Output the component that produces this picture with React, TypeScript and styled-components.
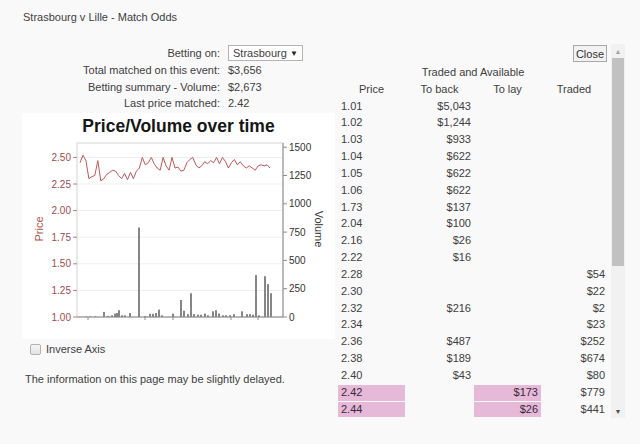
import styled, { createGlobalStyle } from "styled-components";

const GlobalStyle = createGlobalStyle`
    body {
        margin: 0;
        background: #f9f9f9;
        font-family: "Liberation Sans", Arial, sans-serif;
        font-size: 11px;
        color: #404040;
    }
`;

const Page = styled.div`
    width: 640px;
    height: 444px;
    overflow: hidden;
    box-sizing: border-box;
    padding: 10px 0 0 22px;
`;

const Title = styled.div`
    line-height: 14px;
    padding-left: 1px;
`;

const Columns = styled.div`
    display: flex;
    margin-top: 20px;
`;

const LeftColumn = styled.div`
    width: 313px;
    display: flex;
    flex-direction: column;
`;

const InfoGrid = styled.div`
    display: grid;
    grid-template-columns: 198px auto;
    grid-template-rows: 18px;
    grid-auto-rows: 16.5px;
    column-gap: 8px;
    align-items: center;
`;

const Label = styled.span`
    text-align: right;
`;

const FakeSelect = styled.div`
    width: 75px;
    height: 16px;
    box-sizing: border-box;
    display: flex;
    align-items: center;
    justify-content: space-between;
    padding: 0 4px 0 4px;
    background: #ffffff;
    border: 1px solid #b4b4b4;
    & span:last-child {
        font-size: 8px;
        color: #222;
    }
`;

const ChartBox = styled.div`
    margin-top: 1px;
    width: 313px;
    height: 226px;
    background: #ffffff;
`;

const ChartTitle = styled.div`
    text-align: center;
    font-size: 17.5px;
    font-weight: bold;
    line-height: 26px;
    color: #161616;
`;

const CheckRow = styled.label`
    display: flex;
    align-items: center;
    gap: 5px;
    margin-top: 5px;
    padding-left: 8px;
    height: 11px;
`;

const CheckBox = styled.input`
    appearance: none;
    margin: 0;
    width: 11px;
    height: 11px;
    border: 1px solid #b2b2b2;
    border-radius: 2px;
    background: linear-gradient(#f6f6f6, #e2e2e2);
`;

const Notice = styled.div`
    margin-top: 17px;
    padding-left: 3px;
    line-height: 14px;
`;

const RightColumn = styled.div`
    margin-left: 3px;
    height: 374px;
    display: flex;
`;

const TableArea = styled.div`
    width: 272px;
    display: flex;
    flex-direction: column;
    overflow: hidden;
`;

const CloseRow = styled.div`
    display: flex;
    justify-content: flex-end;
    padding: 1px 3px 0 0;
`;

const CloseButton = styled.button`
    height: 17px;
    padding: 0 2px;
    font-family: inherit;
    font-size: 11px;
    color: #333;
    background: #f2f2f2;
    border: 1px solid #a8a8a8;
    border-radius: 0;
`;

const OddsTable = styled.table`
    margin-top: 2px;
    width: 269px;
    table-layout: fixed;
    border-collapse: separate;
    border-spacing: 0 1px;
    & th {
        font-weight: normal;
        text-align: center;
        padding: 0;
        line-height: 15.83px;
    }
`;

const Cell = styled.td<{ $align?: "left" | "right"; $pad?: number; $hot?: boolean }>`
    padding: 0;
    line-height: 15.83px;
    text-align: ${(p) => p.$align || "right"};
    padding-left: ${(p) => (p.$align === "left" ? 3 : 0)}px;
    padding-right: ${(p) => (p.$align === "left" ? 0 : p.$pad ?? 3)}px;
    background: ${(p) => (p.$hot ? "#e6b9d8" : "transparent")};
    color: ${(p) => (p.$hot ? "#3a2838" : "inherit")};
    white-space: nowrap;
`;

const ScrollBar = styled.div`
    margin-left: 1px;
    width: 14px;
    display: flex;
    flex-direction: column;
    background: #f1f1f1;
`;

const ScrollArrow = styled.div<{ $dark?: boolean }>`
    height: 14px;
    display: flex;
    align-items: center;
    justify-content: center;
    font-size: 7px;
    color: ${(p) => (p.$dark ? "#505050" : "#a3a3a3")};
`;

const ScrollTrack = styled.div`
    flex: 1;
    padding: 0 1px;
`;

const ScrollThumb = styled.div<{ $size: number }>`
    height: ${(p) => p.$size}px;
    background: #c1c1c1;
`;

type Row = { price: string; back?: string; lay?: string; traded?: string; hot?: boolean };

const rows: Row[] = [
    { price: "1.01", back: "$5,043" },
    { price: "1.02", back: "$1,244" },
    { price: "1.03", back: "$933" },
    { price: "1.04", back: "$622" },
    { price: "1.05", back: "$622" },
    { price: "1.06", back: "$622" },
    { price: "1.73", back: "$137" },
    { price: "2.04", back: "$100" },
    { price: "2.16", back: "$26" },
    { price: "2.22", back: "$16" },
    { price: "2.28", traded: "$54" },
    { price: "2.30", traded: "$22" },
    { price: "2.32", back: "$216", traded: "$2" },
    { price: "2.34", traded: "$23" },
    { price: "2.36", back: "$487", traded: "$252" },
    { price: "2.38", back: "$189", traded: "$674" },
    { price: "2.40", back: "$43", traded: "$80" },
    { price: "2.42", lay: "$173", traded: "$779", hot: true },
    { price: "2.44", lay: "$26", traded: "$441", hot: true },
];

const prices = [
    2.45, 2.52, 2.47, 2.3, 2.32, 2.33, 2.47, 2.28, 2.3, 2.34, 2.36, 2.38, 2.37, 2.33, 2.3, 2.35,
    2.29, 2.36, 2.3, 2.37, 2.4, 2.5, 2.43, 2.45, 2.5, 2.44, 2.4, 2.38, 2.5, 2.42, 2.38, 2.5,
    2.4, 2.41, 2.37, 2.38, 2.45, 2.48, 2.5, 2.43, 2.4, 2.42, 2.46, 2.44, 2.47, 2.45, 2.5, 2.44,
    2.5, 2.46, 2.4, 2.45, 2.48, 2.43, 2.46, 2.42, 2.4, 2.42, 2.4, 2.38, 2.42, 2.43, 2.42, 2.43, 2.4,
];

const bars: [number, number][] = [
    [86, 4], [90, 5], [95, 5], [104, 45], [108, 10], [112, 15], [115, 30], [117, 35], [119, 60],
    [122, 15], [125, 15], [130, 35], [139, 790], [145, 8], [150, 28], [153, 28], [156, 35],
    [159, 65], [162, 15], [173, 30], [181, 150], [184, 55], [188, 25], [191, 210], [194, 25],
    [198, 20], [201, 20], [205, 30], [208, 15], [213, 50], [216, 60], [219, 30], [223, 15],
    [226, 15], [230, 15], [234, 25], [242, 50], [247, 25], [250, 25], [253, 20], [256, 370],
    [259, 15], [265, 360], [268, 290], [271, 210],
];

const PLOT = { left: 55, right: 261, top: 4, bottom: 178 };
const priceY = (p: number) => PLOT.bottom - ((p - 1) / 0.25) * 26.6;
const volY = (v: number) => PLOT.bottom - (v / 250) * 28.3;

const PriceChart = () => {
    const step = (248 - 58) / (prices.length - 1);
    const line = prices.map((p, i) => `${(58 + i * step).toFixed(1)},${priceY(p).toFixed(1)}`).join(" ");
    const priceTicks = [2.5, 2.25, 2.0, 1.75, 1.5, 1.25, 1.0];
    const volTicks = [1500, 1250, 1000, 750, 500, 250, 0];
    return (
        <svg width="313" height="200" style={{ display: "block" }} fontFamily="Liberation Sans, Arial, sans-serif" fontSize="10">
            {priceTicks.map((t) => (
                <line key={t} x1={PLOT.left} x2={PLOT.right} y1={priceY(t)} y2={priceY(t)} stroke="#efefef" />
            ))}
            <rect x={PLOT.left} y={PLOT.top} width={PLOT.right - PLOT.left} height={PLOT.bottom - PLOT.top} fill="none" stroke="#d4d4d4" />
            <line x1={PLOT.right} x2={PLOT.right} y1={PLOT.top} y2={PLOT.bottom} stroke="#8c8c8c" />
            <line x1={PLOT.left} x2={PLOT.right} y1={PLOT.bottom} y2={PLOT.bottom} stroke="#8c8c8c" />
            {priceTicks.map((t) => (
                <g key={t}>
                    <line x1={51} x2={PLOT.left} y1={priceY(t)} y2={priceY(t)} stroke="#b08080" />
                    <text x={49} y={priceY(t) + 3.5} textAnchor="end" fill="#a04c4c">
                        {t.toFixed(2)}
                    </text>
                </g>
            ))}
            {volTicks.map((t) => (
                <g key={t}>
                    <line x1={PLOT.right} x2={PLOT.right + 4} y1={volY(t)} y2={volY(t)} stroke="#8c8c8c" />
                    <text x={PLOT.right + 6} y={volY(t) + 3.5} fill="#333">
                        {t}
                    </text>
                </g>
            ))}
            {[66, 123, 151, 209, 236].map((x) => (
                <line key={x} x1={x} x2={x} y1={PLOT.bottom} y2={PLOT.bottom + 3} stroke="#8c8c8c" />
            ))}
            {bars.map(([x, v]) => (
                <rect key={x} x={x - 22 - 1} y={volY(v)} width={2} height={PLOT.bottom - volY(v)} fill="#868686" />
            ))}
            <polyline points={line} fill="none" stroke="#c25858" strokeWidth="1" />
            <text transform="translate(21 90) rotate(-90)" textAnchor="middle" fill="#a85848" fontSize="11">
                Price
            </text>
            <text transform="translate(293 90) rotate(90)" textAnchor="middle" fill="#333" fontSize="11">
                Volume
            </text>
        </svg>
    );
};

const App = () => {
    return (
        <>
            <GlobalStyle />
            <Page>
                <Title>Strasbourg v Lille - Match Odds</Title>
                <Columns>
                    <LeftColumn>
                        <InfoGrid>
                            <Label>Betting on:</Label>
                            <FakeSelect>
                                <span>Strasbourg</span>
                                <span>▼</span>
                            </FakeSelect>
                            <Label>Total matched on this event:</Label>
                            <span>$3,656</span>
                            <Label>Betting summary - Volume:</Label>
                            <span>$2,673</span>
                            <Label>Last price matched:</Label>
                            <span>2.42</span>
                        </InfoGrid>
                        <ChartBox>
                            <ChartTitle>Price/Volume over time</ChartTitle>
                            <PriceChart />
                        </ChartBox>
                        <CheckRow>
                            <CheckBox type="checkbox" />
                            <span>Inverse Axis</span>
                        </CheckRow>
                        <Notice>The information on this page may be slightly delayed.</Notice>
                    </LeftColumn>
                    <RightColumn>
                        <TableArea>
                            <CloseRow>
                                <CloseButton>Close</CloseButton>
                            </CloseRow>
                            <OddsTable>
                                <colgroup>
                                    <col style={{ width: 67 }} />
                                    <col style={{ width: 69 }} />
                                    <col style={{ width: 67 }} />
                                    <col style={{ width: 66 }} />
                                </colgroup>
                                <thead>
                                    <tr>
                                        <th></th>
                                        <th colSpan={2}>Traded and Available</th>
                                        <th></th>
                                    </tr>
                                    <tr>
                                        <th>Price</th>
                                        <th>To back</th>
                                        <th>To lay</th>
                                        <th>Traded</th>
                                    </tr>
                                </thead>
                                <tbody>
                                    {rows.map((row) => (
                                        <tr key={row.price}>
                                            <Cell $align="left" $hot={row.hot}>
                                                {row.price}
                                            </Cell>
                                            <Cell>{row.back}</Cell>
                                            <Cell $hot={row.hot}>{row.lay}</Cell>
                                            <Cell $pad={2}>{row.traded}</Cell>
                                        </tr>
                                    ))}
                                </tbody>
                            </OddsTable>
                        </TableArea>
                        <ScrollBar>
                            <ScrollArrow>▲</ScrollArrow>
                            <ScrollTrack>
                                <ScrollThumb $size={208} />
                            </ScrollTrack>
                            <ScrollArrow $dark>▼</ScrollArrow>
                        </ScrollBar>
                    </RightColumn>
                </Columns>
            </Page>
        </>
    );
};

export default App;
